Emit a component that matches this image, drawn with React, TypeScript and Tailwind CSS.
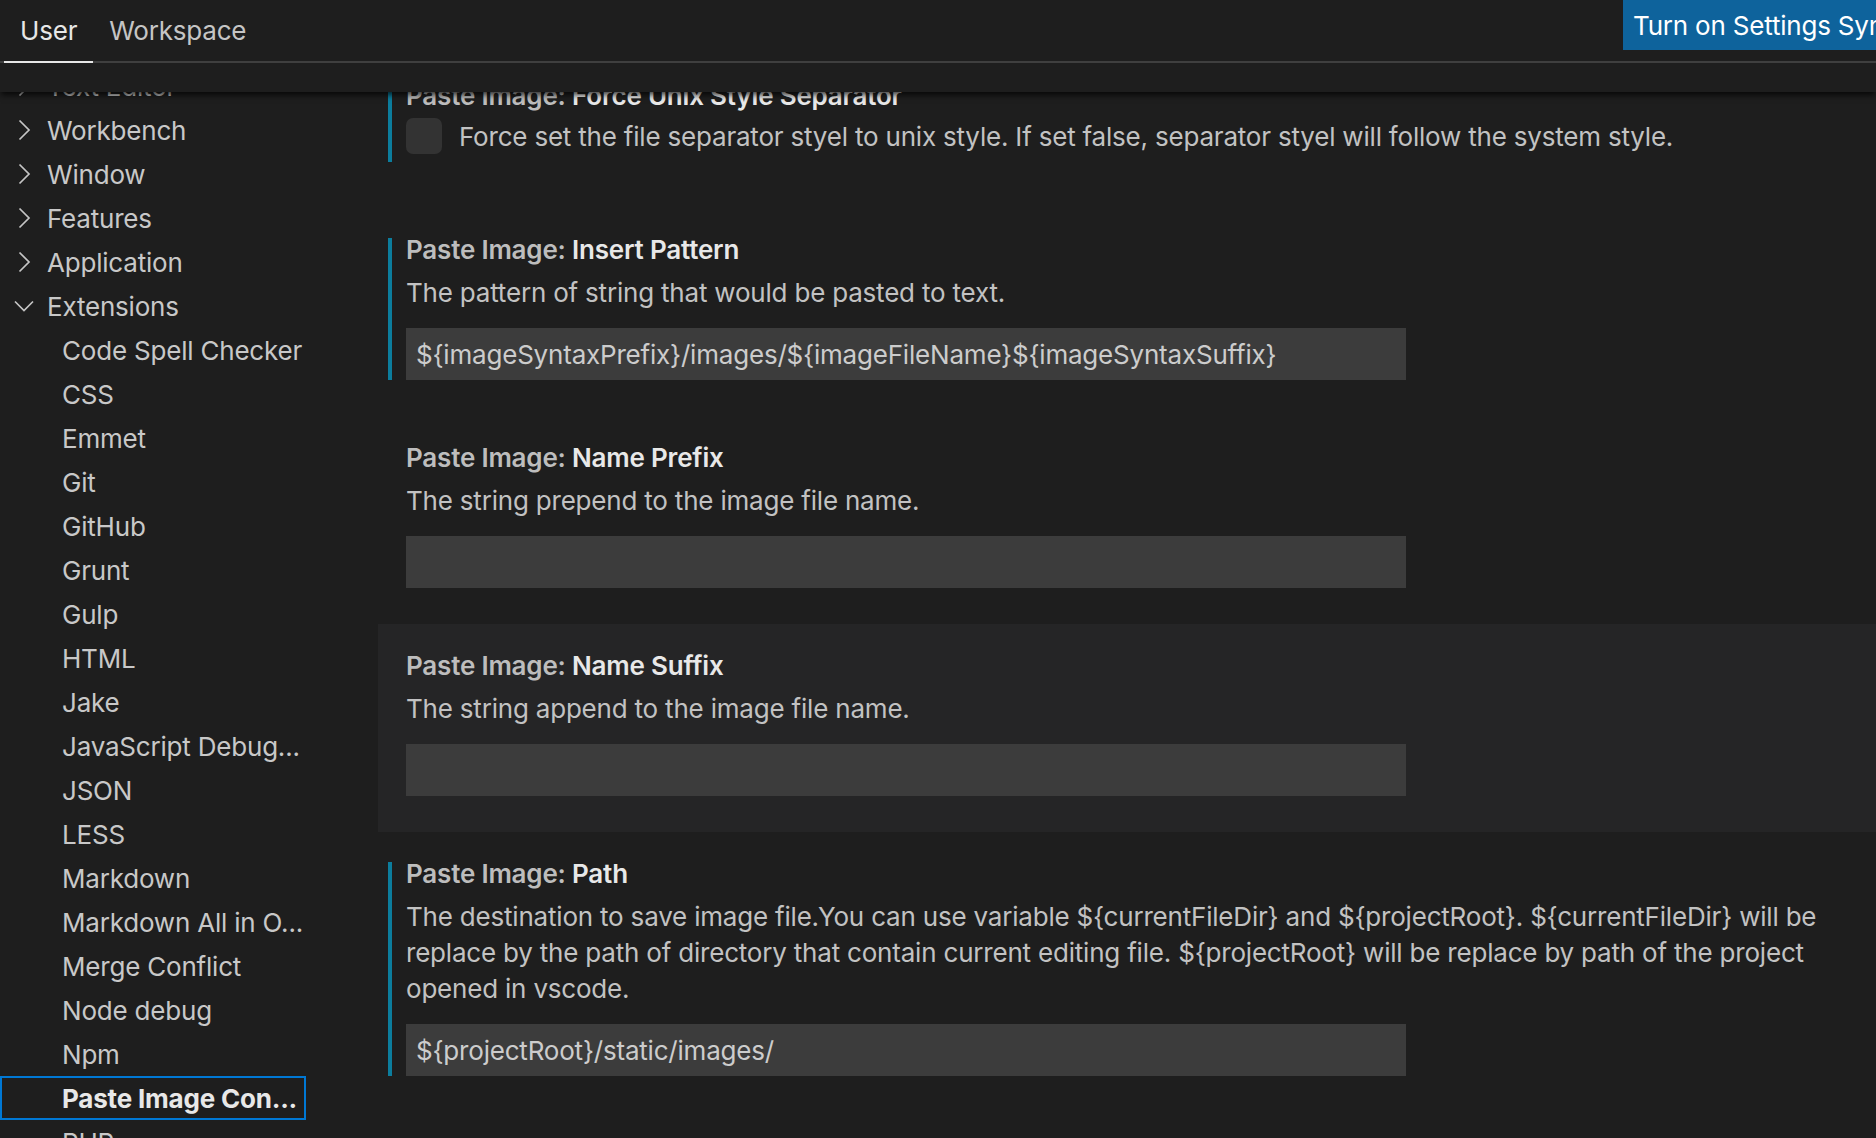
import React from "react";

type TocItem = { label: string; level: 0 | 1; open?: boolean; selected?: boolean };

const toc: TocItem[] = [
  { label: "Text Editor", level: 0 },
  { label: "Workbench", level: 0 },
  { label: "Window", level: 0 },
  { label: "Features", level: 0 },
  { label: "Application", level: 0 },
  { label: "Extensions", level: 0, open: true },
  { label: "Code Spell Checker", level: 1 },
  { label: "CSS", level: 1 },
  { label: "Emmet", level: 1 },
  { label: "Git", level: 1 },
  { label: "GitHub", level: 1 },
  { label: "Grunt", level: 1 },
  { label: "Gulp", level: 1 },
  { label: "HTML", level: 1 },
  { label: "Jake", level: 1 },
  { label: "JavaScript Debug...", level: 1 },
  { label: "JSON", level: 1 },
  { label: "LESS", level: 1 },
  { label: "Markdown", level: 1 },
  { label: "Markdown All in O...", level: 1 },
  { label: "Merge Conflict", level: 1 },
  { label: "Node debug", level: 1 },
  { label: "Npm", level: 1 },
  { label: "Paste Image Con...", level: 1, selected: true },
  { label: "PHP", level: 1 },
];

function ChevronRight() {
  return (
    <svg width="13" height="22" viewBox="0 0 13 22" fill="none">
      <path d="M1.5 1.5 L11 11 L1.5 20.5" stroke="#c5c5c5" strokeWidth="1.7" />
    </svg>
  );
}

function ChevronDown() {
  return (
    <svg width="20" height="12" viewBox="0 0 20 12" fill="none">
      <path d="M1 1.5 L10 10.5 L19 1.5" stroke="#c5c5c5" strokeWidth="1.7" />
    </svg>
  );
}

function TocRow({ item }: { item: TocItem }) {
  if (item.level === 1) {
    return (
      <div
        className={
          item.selected
            ? "flex h-[44px] items-center border-2 border-[#0078d4] pl-[60px] font-bold text-[#e8e8e8]"
            : "flex h-[44px] items-center pl-[62px] text-[#c8c8c8]"
        }
      >
        <span className="whitespace-nowrap">{item.label}</span>
      </div>
    );
  }
  return (
    <div className="flex h-[44px] items-center text-[#c8c8c8]">
      {item.open ? (
        <span className="flex w-[47px] shrink-0 pl-[14px]">
          <ChevronDown />
        </span>
      ) : (
        <span className="flex w-[47px] shrink-0 pl-[18px]">
          <ChevronRight />
        </span>
      )}
      <span className="whitespace-nowrap">{item.label}</span>
    </div>
  );
}

function SettingTitle({ name }: { name: string }) {
  return (
    <div className="h-[40px] whitespace-nowrap font-semibold leading-[40px]">
      <span className="text-[#bdbdbd]">Paste Image: </span>
      <span className="text-[#e8e8e8]">{name}</span>
    </div>
  );
}

function TextSetting({
  name,
  lines,
  value,
  modified,
  hovered,
}: {
  name: string;
  lines: string[];
  value: string;
  modified?: boolean;
  hovered?: boolean;
}) {
  return (
    <section className={`relative pb-[36px] pl-[28px] pt-[22px] ${hovered ? "bg-[#252526]" : ""}`}>
      {modified && <div className="absolute bottom-[36px] left-[10px] top-[30px] w-[4px] bg-[#0c7d9d]" />}
      <SettingTitle name={name} />
      <div className="mt-[5px] leading-[36px] text-[#c2c2c2]">
        {lines.map((line) => (
          <div key={line} className="whitespace-nowrap">
            {line}
          </div>
        ))}
      </div>
      <div className="mt-[17px] flex h-[52px] w-[1000px] items-center bg-[#3c3c3c] pl-[10px] text-[#cccccc]">
        {value}
      </div>
    </section>
  );
}

export default function App() {
  return (
    <div className="flex h-[1138px] w-[1876px] flex-col overflow-hidden bg-[#1e1e1e] font-['Inter',sans-serif] text-[26px] tracking-[-0.2px]">
      <header className="relative z-10 h-[92px] shrink-0 bg-[#1e1e1e] shadow-[0_4px_6px_-1px_rgba(0,0,0,0.75)]">
        <div className="flex h-[63px] border-b-2 border-[#3f3f3f]">
          <div className="flex min-w-0 flex-1 pl-[4px]">
            <div className="-mb-[2px] flex h-[63px] items-center border-b-2 border-[#e7e7e7] px-[16px] text-[#e7e7e7]">
              User
            </div>
            <div className="flex h-[61px] items-center px-[16px] text-[#c5c5c5]">Workspace</div>
          </div>
          <div className="flex h-[50px] w-[253px] shrink-0 items-center overflow-hidden whitespace-nowrap bg-[#0e639c] pl-[10px] text-white">
            Turn on Settings Sync
          </div>
        </div>
      </header>

      <div className="flex min-h-0 flex-1 overflow-hidden">
        <nav className="-mt-[28px] w-[306px] shrink-0">
          {toc.map((item) => (
            <TocRow key={item.label} item={item} />
          ))}
        </nav>

        <main className="-mt-[38px] ml-[72px] min-w-0 flex-1">
          <section className="relative h-[154px] pl-[28px] pt-[22px]">
            <div className="absolute bottom-[46px] left-[10px] top-[30px] w-[4px] bg-[#0c7d9d]" />
            <SettingTitle name="Force Unix Style Separator" />
            <div className="mt-[2px] flex h-[36px] items-center">
              <div className="h-[36px] w-[36px] shrink-0 rounded-[7px] bg-[#333333]" />
              <span className="ml-[17px] whitespace-nowrap text-[#c2c2c2]">
                Force set the file separator styel to unix style. If set false, separator styel will follow the system style.
              </span>
            </div>
          </section>

          <TextSetting
            name="Insert Pattern"
            lines={["The pattern of string that would be pasted to text."]}
            value="${imageSyntaxPrefix}/images/${imageFileName}${imageSyntaxSuffix}"
            modified
          />
          <TextSetting name="Name Prefix" lines={["The string prepend to the image file name."]} value="" />
          <TextSetting name="Name Suffix" lines={["The string append to the image file name."]} value="" hovered />
          <TextSetting
            name="Path"
            lines={[
              "The destination to save image file.You can use variable ${currentFileDir} and ${projectRoot}. ${currentFileDir} will be",
              "replace by the path of directory that contain current editing file. ${projectRoot} will be replace by path of the project",
              "opened in vscode.",
            ]}
            value="${projectRoot}/static/images/"
            modified
          />
        </main>
      </div>
    </div>
  );
}
